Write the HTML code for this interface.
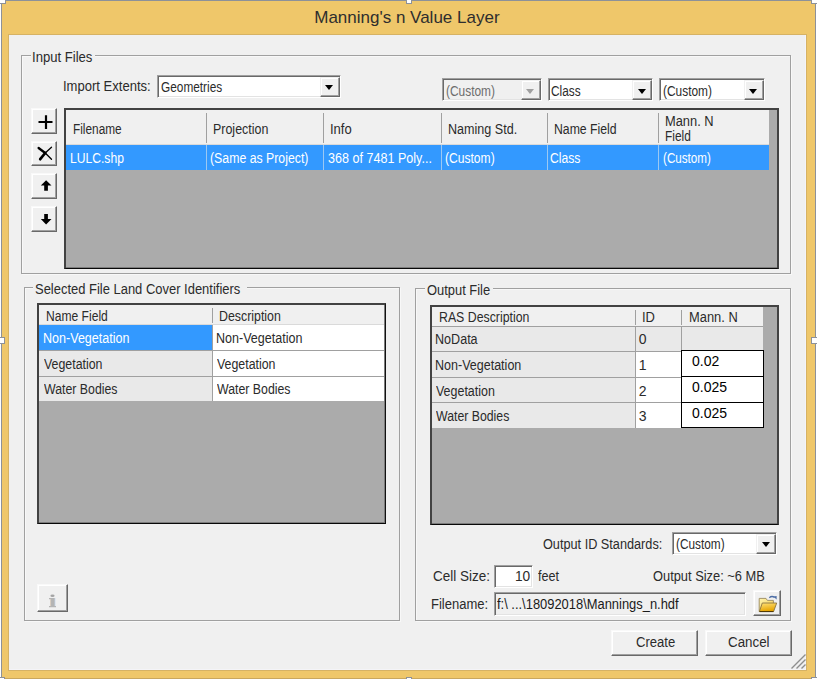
<!DOCTYPE html>
<html><head><meta charset="utf-8">
<style>
*{margin:0;padding:0}
html,body{width:817px;height:679px;overflow:hidden;background:#fff}
body{position:relative;font-family:"Liberation Sans",sans-serif;font-size:14px;line-height:16px;color:#000}
.a{position:absolute}
.t{position:absolute;white-space:nowrap;line-height:16px;font-size:14px;transform-origin:0 0}
.frame{position:absolute;left:1px;top:0;width:813px;height:677px;border:1px solid #8d9199;border-bottom:1px solid #c9a75e;background:#efc76a}
.client{position:absolute;left:8px;top:34px;width:797px;height:635px;background:#f0f0f0;border:1px solid #d6b264;box-shadow:inset -1px -1px 0 #f4f4f8}
.hd{position:absolute;background:#fff;border:1px solid #8d9199;box-sizing:border-box}
.grp{position:absolute;box-sizing:border-box;border:1px solid #a0a0a0;box-shadow:1px 1px 0 #f8f8f8,inset 1px 1px 0 #f8f8f8}
.leg{position:absolute;background:#f0f0f0;height:8px}
.sunk{position:absolute;box-sizing:border-box;border:1px solid;border-color:#a0a0a0 #fff #fff #a0a0a0;box-shadow:inset 1px 1px 0 #696969,inset -1px -1px 0 #e3e3e3;background:#fff}
.btn{position:absolute;box-sizing:border-box;background:#f0f0f0;border:1px solid;border-color:#f9f9f9 #696969 #696969 #f9f9f9;box-shadow:inset -1px -1px 0 #a0a0a0,inset 1px 1px 0 #fff}
.dd{position:absolute;box-sizing:border-box;background:#f0f0f0;border:1px solid;border-color:#f0f0f0 #696969 #696969 #f0f0f0;box-shadow:inset -1px -1px 0 #a0a0a0,inset 1px 1px 0 #fff}
.arr{position:absolute;width:0;height:0;border-left:4.5px solid transparent;border-right:4.5px solid transparent;border-top:5px solid #000}
.grid{position:absolute;box-sizing:border-box;background:#ababab;border:2px solid #424242;border-bottom:1px solid #080808;box-shadow:inset 0 -1px 0 #7c7c7c}
.blue{background:#3399ff}
.sep{position:absolute;width:1px;background:#a0a0a0}
</style></head><body>
<div class="frame"></div>
<div class="client"></div>
<!-- resize handles -->
<div class="hd" style="left:-1px;top:-1px;width:7px;height:5px"></div>
<div class="hd" style="left:406px;top:-1px;width:6px;height:5px"></div>
<div class="hd" style="left:811px;top:-1px;width:7px;height:5px"></div>
<div class="hd" style="left:-1px;top:337px;width:6px;height:7px"></div>
<div class="hd" style="left:811px;top:337px;width:7px;height:7px"></div>
<div class="hd" style="left:-1px;top:677px;width:6px;height:4px"></div>
<div class="hd" style="left:406px;top:677px;width:6px;height:4px"></div>
<div class="hd" style="left:811px;top:677px;width:7px;height:4px"></div>

<!-- Input Files group -->
<div class="grp" style="left:21px;top:55px;width:770px;height:219px"></div>
<div class="leg" style="left:31px;top:53px;width:64px"></div>
<div class="sunk" style="left:157px;top:75px;width:184px;height:23px">
  <div class="dd" style="left:162px;top:1px;width:20px;height:20px"><div class="arr" style="left:4px;top:7px"></div></div></div>

<div class="sunk" style="left:442px;top:78px;width:100px;height:23px;background:#f0f0f0">
  <div class="dd" style="left:78px;top:1px;width:20px;height:20px"><div class="arr" style="left:4px;top:8px;border-top-color:#a0a0a0"></div></div></div>
<div class="sunk" style="left:548px;top:78px;width:105px;height:23px">
  <div class="dd" style="left:83px;top:1px;width:20px;height:20px"><div class="arr" style="left:5px;top:8px"></div></div></div>
<div class="sunk" style="left:659px;top:78px;width:106px;height:23px">
  <div class="dd" style="left:84px;top:1px;width:20px;height:20px"><div class="arr" style="left:4px;top:8px"></div></div></div>

<!-- side buttons -->
<div class="btn" style="left:31px;top:108px;width:26px;height:26px">
 <svg class="a" style="left:0;top:0" width="25" height="25"><path d="M6.5 13H20.5M14 6.3V20.1" stroke="#000" stroke-width="2.2" fill="none"/></svg></div>
<div class="btn" style="left:31px;top:141px;width:26px;height:25px">
 <svg class="a" style="left:0;top:0" width="25" height="25"><g stroke="#000" fill="none" stroke-linecap="round"><path d="M6.6 6L13.2 11" stroke-width="2.3"/><path d="M13.2 11L19.5 17.3" stroke-width="1.3"/><path d="M8.2 17.2L13.2 11" stroke-width="2.7"/><path d="M13.2 11L19.5 5.3" stroke-width="1.3"/></g></svg></div>
<div class="btn" style="left:31px;top:173px;width:26px;height:26px">
 <svg class="a" style="left:0;top:0" width="25" height="25"><path d="M14.1 6.3L19.5 11.6H15.9V16.8H12.2V11.6H8.8Z" fill="#000"/></svg></div>
<div class="btn" style="left:31px;top:206px;width:26px;height:26px">
 <svg class="a" style="left:0;top:0" width="25" height="25"><path d="M12.2 7H15.9V11.9H19.5L14.1 17.6L8.8 11.9H12.2Z" fill="#000"/></svg></div>

<!-- Input files grid -->
<div class="grid" style="left:64px;top:108px;width:715px;height:161px">
  <div class="a" style="left:0;top:0;width:703px;height:34px;background:#f0f0f0"></div>
  <div class="a" style="left:0;top:34px;width:703px;height:1px;background:#dadada"></div>
  <div class="a blue" style="left:0;top:35px;width:703px;height:25px"></div>
</div>
<div class="sep" style="left:206px;top:113px;height:30px"></div>
<div class="sep" style="left:323px;top:113px;height:30px"></div>
<div class="sep" style="left:441px;top:113px;height:30px"></div>
<div class="sep" style="left:547px;top:113px;height:30px"></div>
<div class="sep" style="left:658px;top:113px;height:30px"></div>
<div class="sep" style="left:206px;top:145px;height:25px;background:#9cc8f2"></div>
<div class="sep" style="left:323px;top:145px;height:25px;background:#9cc8f2"></div>
<div class="sep" style="left:441px;top:145px;height:25px;background:#9cc8f2"></div>
<div class="sep" style="left:547px;top:145px;height:25px;background:#9cc8f2"></div>
<div class="sep" style="left:658px;top:145px;height:25px;background:#9cc8f2"></div>

<!-- Selected File Land Cover Identifiers -->
<div class="grp" style="left:24px;top:287px;width:376px;height:334px"></div>
<div class="leg" style="left:33px;top:285px;width:214px"></div>
<div class="grid" style="left:37px;top:303px;width:349px;height:221px;border-right:1px solid #111;box-shadow:inset 0 -1px 0 #7c7c7c,inset -1px 0 0 #7c7c7c">
  <div class="a" style="left:0;top:0;width:345px;height:19px;background:#f0f0f0"></div>
  <div class="a" style="left:0;top:19px;width:345px;height:1px;background:#dadada"></div>
  <div class="a blue" style="left:0;top:20px;width:173px;height:25px"></div>
  <div class="a" style="left:174px;top:20px;width:171px;height:25px;background:#fff"></div>
  <div class="a" style="left:0;top:45px;width:345px;height:1px;background:#a0a0a0"></div>
  <div class="a" style="left:0;top:46px;width:173px;height:25px;background:#e9e9e9"></div>
  <div class="a" style="left:174px;top:46px;width:171px;height:25px;background:#fff"></div>
  <div class="a" style="left:0;top:71px;width:345px;height:1px;background:#a0a0a0"></div>
  <div class="a" style="left:0;top:72px;width:173px;height:24px;background:#e9e9e9"></div>
  <div class="a" style="left:174px;top:72px;width:171px;height:24px;background:#fff"></div>
  <div class="a" style="left:173px;top:20px;width:1px;height:76px;background:#a0a0a0"></div>
  <div class="a" style="left:173px;top:3px;width:1px;height:15px;background:#a0a0a0"></div>
</div>
<div class="btn" style="left:37px;top:584px;width:31px;height:28px"><svg class="a" style="left:0;top:0" width="29" height="26"><ellipse cx="14.5" cy="10.8" rx="2.1" ry="1.2" fill="#a4a4a4"/><path d="M11 13H17V21H18V22.2H11V21H12.6V14.2H11Z" fill="#b4b4b4"/><path d="M12.6 14.2V21" stroke="#d8c8b8" stroke-width="0.8"/><path d="M17 13V21" stroke="#c8d8ec" stroke-width="0.8"/></svg></div>

<!-- Output File -->
<div class="grp" style="left:415px;top:288px;width:376px;height:333px"></div>
<div class="leg" style="left:425px;top:286px;width:68px"></div>
<div class="grid" style="left:430px;top:305px;width:349px;height:220px">
  <div class="a" style="left:0;top:0;width:331px;height:19px;background:#f0f0f0"></div>
  <div class="a" style="left:0;top:19px;width:331px;height:1px;background:#a0a0a0"></div>
  <div class="a" style="left:0;top:20px;width:331px;height:24px;background:#e9e9e9"></div>
  <div class="a" style="left:0;top:44px;width:331px;height:1px;background:#a0a0a0"></div>
  <div class="a" style="left:0;top:45px;width:203px;height:25px;background:#e9e9e9"></div>
  <div class="a" style="left:204px;top:45px;width:127px;height:25px;background:#fff"></div>
  <div class="a" style="left:0;top:70px;width:331px;height:1px;background:#a0a0a0"></div>
  <div class="a" style="left:0;top:71px;width:203px;height:24px;background:#e9e9e9"></div>
  <div class="a" style="left:204px;top:71px;width:127px;height:24px;background:#fff"></div>
  <div class="a" style="left:0;top:95px;width:331px;height:1px;background:#a0a0a0"></div>
  <div class="a" style="left:0;top:96px;width:203px;height:25px;background:#e9e9e9"></div>
  <div class="a" style="left:204px;top:96px;width:127px;height:25px;background:#fff"></div>
  <div class="a" style="left:203px;top:20px;width:1px;height:101px;background:#a0a0a0"></div>
  <div class="a" style="left:249px;top:20px;width:1px;height:25px;background:#a0a0a0"></div>
  <div class="a" style="left:203px;top:3px;width:1px;height:15px;background:#a0a0a0"></div>
  <div class="a" style="left:249px;top:3px;width:1px;height:15px;background:#a0a0a0"></div>
</div>
<div class="a" style="left:681px;top:350px;width:83px;height:78px;box-sizing:border-box;border:1px solid #000;background:#fff"></div>
<div class="a" style="left:681px;top:376px;width:83px;height:1px;background:#000"></div>
<div class="a" style="left:681px;top:402px;width:83px;height:1px;background:#000"></div>
<div class="t" style="left:692px;top:353px;font-size:14px">0.02</div>
<div class="t" style="left:692px;top:379px;font-size:14px">0.025</div>
<div class="t" style="left:692px;top:405px;font-size:14px">0.025</div>

<div class="sunk" style="left:672px;top:532px;width:105px;height:23px">
  <div class="dd" style="left:83px;top:1px;width:20px;height:20px"><div class="arr" style="left:5px;top:7px"></div></div></div>
<div class="sunk" style="left:494px;top:565px;width:39px;height:23px"></div>
<div class="sunk" style="left:494px;top:592px;width:252px;height:24px;background:#f0f0f0"></div>
<div class="btn" style="left:753px;top:590px;width:28px;height:26px">
 <svg class="a" style="left:0;top:0" width="26" height="24" viewBox="0 0 26 24">
  <defs><linearGradient id="fb" x1="0" y1="0" x2="1" y2="1"><stop offset="0" stop-color="#fff4b0"/><stop offset="1" stop-color="#f2c84a"/></linearGradient>
  <linearGradient id="ff" x1="0" y1="0" x2="0.3" y2="1"><stop offset="0" stop-color="#ffe27a"/><stop offset="1" stop-color="#e6a400"/></linearGradient></defs>
  <path d="M5.2 20.5V7.4H12L13.4 9.4H19.4V20.5Z" fill="url(#fb)" stroke="#9a8a60" stroke-width="0.9"/>
  <path d="M8.3 12H22.7L19.6 20.5H5.4Z" fill="url(#ff)" stroke="#8a7440" stroke-width="0.9"/>
  <path d="M5.6 20.6H19.4" stroke="#4a3400" stroke-width="1"/>
  <path d="M15.3 6.7Q18 4.3 20.6 6.6" stroke="#4d6ea6" stroke-width="1.3" fill="none"/>
  <path d="M19.4 5.6L22.6 8.6L22.6 4.9Z" fill="#4d6ea6"/>
 </svg></div>
<svg class="a" style="left:790px;top:653px" width="17" height="17">
 <path d="M1.5 15.5L15.5 1.5M6.5 15.5L15.5 6.5M11.5 15.5L15.5 11.5" stroke="#8e8e8e" stroke-width="1.4" fill="none"/>
</svg>

<div class="btn" style="left:611px;top:630px;width:87px;height:26px"></div>
<div class="btn" style="left:705px;top:630px;width:87px;height:26px"></div>
<div class="t" style="left:314.24px;top:10px;font-size:17px;color:#2e2e2e;">Manning&#x27;s n Value Layer</div>
<div class="t" style="left:32.22px;top:49px;font-size:14px;color:#2b2b2b;transform:scaleX(0.9354);">Input Files</div>
<div class="t" style="left:62.53px;top:78px;font-size:14px;color:#2b2b2b;transform:scaleX(0.9316);">Import Extents:</div>
<div class="t" style="left:161.01px;top:79px;font-size:14px;color:#2b2b2b;transform:scaleX(0.8456);">Geometries</div>
<div class="t" style="left:445.89px;top:83px;font-size:14px;color:#6d6d6d;transform:scaleX(0.8503);">(Custom)</div>
<div class="t" style="left:550.61px;top:83px;font-size:14px;color:#2b2b2b;transform:scaleX(0.8459);">Class</div>
<div class="t" style="left:662.79px;top:83px;font-size:14px;color:#2b2b2b;transform:scaleX(0.8503);">(Custom)</div>
<div class="t" style="left:72.85px;top:121px;font-size:14px;color:#2b2b2b;transform:scaleX(0.8460);">Filename</div>
<div class="t" style="left:213.10px;top:121px;font-size:14px;color:#2b2b2b;transform:scaleX(0.8887);">Projection</div>
<div class="t" style="left:330.13px;top:121px;font-size:14px;color:#2b2b2b;transform:scaleX(0.9307);">Info</div>
<div class="t" style="left:447.79px;top:121px;font-size:14px;color:#2b2b2b;transform:scaleX(0.8979);">Naming Std.</div>
<div class="t" style="left:553.62px;top:121px;font-size:14px;color:#2b2b2b;transform:scaleX(0.8747);">Name Field</div>
<div class="t" style="left:665.17px;top:113px;font-size:14px;color:#2b2b2b;transform:scaleX(0.9188);">Mann. N</div>
<div class="t" style="left:665.25px;top:128px;font-size:14px;color:#2b2b2b;transform:scaleX(0.8487);">Field</div>
<div class="t" style="left:69.93px;top:150px;font-size:14px;color:#fff;transform:scaleX(0.8654);">LULC.shp</div>
<div class="t" style="left:209.56px;top:150px;font-size:14px;color:#fff;transform:scaleX(0.8784);">(Same as Project)</div>
<div class="t" style="left:327.90px;top:150px;font-size:14px;color:#fff;transform:scaleX(0.8979);">368 of 7481 Poly...</div>
<div class="t" style="left:444.58px;top:150px;font-size:14px;color:#fff;transform:scaleX(0.8629);">(Custom)</div>
<div class="t" style="left:549.59px;top:150px;font-size:14px;color:#fff;transform:scaleX(0.8666);">Class</div>
<div class="t" style="left:662.50px;top:150px;font-size:14px;color:#fff;transform:scaleX(0.8324);">(Custom)</div>
<div class="t" style="left:34.72px;top:281px;font-size:14px;color:#2b2b2b;transform:scaleX(0.9255);">Selected File Land Cover Identifiers</div>
<div class="t" style="left:46.13px;top:308px;font-size:14px;color:#2b2b2b;transform:scaleX(0.8632);">Name Field</div>
<div class="t" style="left:219.21px;top:308px;font-size:14px;color:#2b2b2b;transform:scaleX(0.8827);">Description</div>
<div class="t" style="left:42.70px;top:330px;font-size:14px;color:#fff;transform:scaleX(0.8963);">Non-Vegetation</div>
<div class="t" style="left:215.80px;top:330px;font-size:14px;color:#2b2b2b;transform:scaleX(0.8952);">Non-Vegetation</div>
<div class="t" style="left:43.64px;top:356px;font-size:14px;color:#2b2b2b;transform:scaleX(0.8838);">Vegetation</div>
<div class="t" style="left:216.74px;top:356px;font-size:14px;color:#2b2b2b;transform:scaleX(0.8838);">Vegetation</div>
<div class="t" style="left:43.64px;top:381px;font-size:14px;color:#2b2b2b;transform:scaleX(0.8800);">Water Bodies</div>
<div class="t" style="left:216.74px;top:381px;font-size:14px;color:#2b2b2b;transform:scaleX(0.8800);">Water Bodies</div>
<div class="t" style="left:426.52px;top:282px;font-size:14px;color:#2b2b2b;transform:scaleX(0.9226);">Output File</div>
<div class="t" style="left:439.41px;top:309px;font-size:14px;color:#2b2b2b;transform:scaleX(0.8802);">RAS Description</div>
<div class="t" style="left:642.33px;top:309px;font-size:14px;color:#2b2b2b;transform:scaleX(0.9249);">ID</div>
<div class="t" style="left:689.07px;top:309px;font-size:14px;color:#2b2b2b;transform:scaleX(0.9208);">Mann. N</div>
<div class="t" style="left:435.19px;top:331px;font-size:14px;color:#2b2b2b;transform:scaleX(0.8977);">NoData</div>
<div class="t" style="left:638.84px;top:331px;font-size:14px;color:#2b2b2b;">0</div>
<div class="t" style="left:435.20px;top:357px;font-size:14px;color:#2b2b2b;transform:scaleX(0.8942);">Non-Vegetation</div>
<div class="t" style="left:638.65px;top:357px;font-size:14px;color:#2b2b2b;">1</div>
<div class="t" style="left:436.14px;top:383px;font-size:14px;color:#2b2b2b;transform:scaleX(0.8900);">Vegetation</div>
<div class="t" style="left:638.70px;top:383px;font-size:14px;color:#2b2b2b;">2</div>
<div class="t" style="left:436.14px;top:408px;font-size:14px;color:#2b2b2b;transform:scaleX(0.8776);">Water Bodies</div>
<div class="t" style="left:638.84px;top:408px;font-size:14px;color:#2b2b2b;">3</div>
<div class="t" style="left:542.73px;top:536px;font-size:14px;color:#2b2b2b;transform:scaleX(0.9068);">Output ID Standards:</div>
<div class="t" style="left:675.79px;top:536px;font-size:14px;color:#2b2b2b;transform:scaleX(0.8450);">(Custom)</div>
<div class="t" style="left:432.93px;top:568px;font-size:14px;color:#2b2b2b;transform:scaleX(0.9629);">Cell Size:</div>
<div class="t" style="left:515.27px;top:568px;font-size:14px;color:#2b2b2b;transform:scaleX(0.9786);">10</div>
<div class="t" style="left:538.41px;top:568px;font-size:14px;color:#2b2b2b;transform:scaleX(0.8988);">feet</div>
<div class="t" style="left:652.72px;top:568px;font-size:14px;color:#2b2b2b;transform:scaleX(0.9178);">Output Size: ~6 MB</div>
<div class="t" style="left:430.96px;top:596px;font-size:14px;color:#2b2b2b;transform:scaleX(0.9309);">Filename:</div>
<div class="t" style="left:496.81px;top:596px;font-size:14px;color:#1a1a1a;transform:scaleX(0.9224);">f:\ ...\18092018\Mannings_n.hdf</div>
<div class="t" style="left:635.55px;top:634px;font-size:14px;color:#2b2b2b;transform:scaleX(0.9343);">Create</div>
<div class="t" style="left:728.13px;top:634px;font-size:14px;color:#2b2b2b;transform:scaleX(0.9540);">Cancel</div>

</body></html>
